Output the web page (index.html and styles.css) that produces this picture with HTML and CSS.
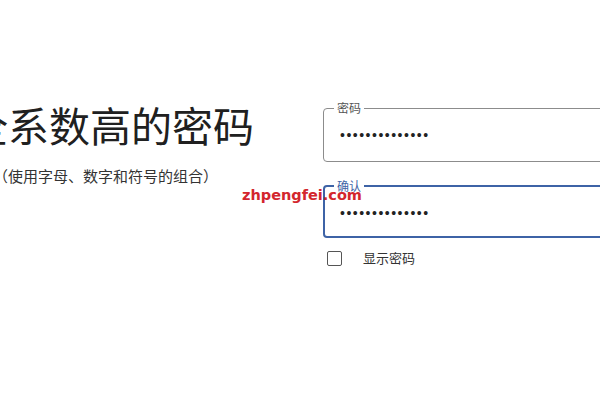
FILE: index.html
```html
<!DOCTYPE html>
<html lang="zh">
<head>
<meta charset="utf-8">
<title>密码</title>
<link rel="stylesheet" href="styles.css">
</head>
<body>
<main class="page">
  <section class="intro">
    <h1 class="title">全系数高的密码</h1>
    <p class="hint">（使用字母、数字和符号的组合）</p>
  </section>
  <section class="form">
    <fieldset class="field">
      <legend class="field-label">密码</legend>
      <div class="field-value">••••••••••••••</div>
    </fieldset>
    <fieldset class="field field-active">
      <legend class="field-label">确认</legend>
      <div class="field-value">••••••••••••••</div>
    </fieldset>
    <label class="show">
      <span class="box"></span>
      <span class="show-text">显示密码</span>
    </label>
  </section>
  <div class="watermark">zhpengfei.com</div>
</main>
</body>
</html>
```

FILE: styles.css
```css
html, body {
  margin: 0;
  padding: 0;
  background: #ffffff;
  overflow: hidden;
  width: 600px;
  height: 400px;
}
body {
  font-family: "Noto Sans CJK SC", "Noto Sans", sans-serif;
  color: #222;
}
.page {
  position: relative;
  display: grid;
  grid-template-columns: 323px 320px;
  align-items: start;
  padding-top: 100px;
}
.intro {
  min-width: 0;
}
.title {
  margin: 0 0 0 -33px;
  font-size: 41px;
  line-height: 49px;
  font-weight: 400;
  color: #202020;
  white-space: nowrap;
}
.hint {
  margin: 16px 0 0 -7px;
  font-size: 15px;
  line-height: 22px;
  color: #333;
  white-space: nowrap;
}
.form {
  display: flex;
  flex-direction: column;
  margin-top: 1px;
}
.field {
  margin: 0;
  padding: 10px 0 16px 10px;
  border: 1px solid #8c8c8c;
  border-radius: 4px;
  min-width: 0;
}
.field-label {
  padding: 0 3px;
  font-size: 12px;
  line-height: 14px;
  color: #555;
}
.field-value {
  margin-left: 6px;
  font-family: "Liberation Sans", sans-serif;
  font-size: 14px;
  line-height: 20px;
  letter-spacing: 1.5px;
  color: #222;
}
.field-active {
  margin-top: 17px;
  border: 2px solid #3e63a6;
  padding-left: 9px;
  padding-bottom: 13px;
}
.field-active .field-label {
  color: #3e63a6;
}
.show {
  display: flex;
  align-items: center;
  gap: 21px;
  margin: 11px 0 0 4px;
}
.box {
  width: 13px;
  height: 13px;
  border: 1.5px solid #555;
  border-radius: 2px;
}
.show-text {
  font-size: 13px;
  line-height: 18px;
  color: #333;
}
.watermark {
  position: absolute;
  left: 242px;
  top: 185px;
  font-family: "DejaVu Sans", sans-serif;
  font-weight: 700;
  font-size: 14.5px;
  line-height: 20px;
  color: #d3262d;
}
```
